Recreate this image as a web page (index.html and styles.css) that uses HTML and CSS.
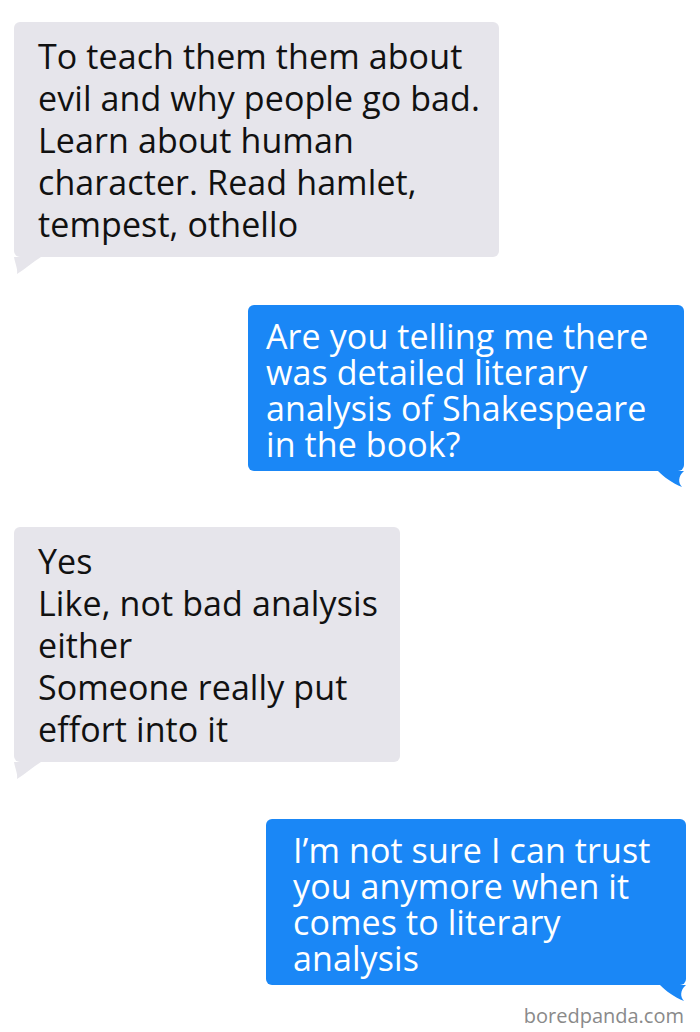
FILE: index.html
```html
<!DOCTYPE html>
<html>
<head>
<meta charset="utf-8">
<link rel="stylesheet" href="styles.css">
</head>
<body>
<div class="chat">
  <div class="bubble gray b1">
    <p>To teach them them about<br>evil and why people go bad.<br>Learn about human<br>character. Read hamlet,<br>tempest, othello</p>
    <svg class="tail tail-left" width="30" height="20" viewBox="0 0 30 20"><path d="M0 0 H27 C19 5 11 12 3 17 C4 12 1 6 0 0 Z" fill="#e6e5eb"/></svg>
  </div>
  <div class="bubble blue b2">
    <p>Are you telling me there<br>was detailed literary<br>analysis of Shakespeare<br>in the book?</p>
    <svg class="tail tail-right" width="30" height="20" viewBox="0 0 30 20"><path d="M30 0 H4 C10 6 18 12 28 16 C24 12 24 5 30 0 Z" fill="#1a87f6"/></svg>
  </div>
  <div class="bubble gray b3">
    <p>Yes<br>Like, not bad analysis<br>either<br>Someone really put<br>effort into it</p>
    <svg class="tail tail-left" width="30" height="20" viewBox="0 0 30 20"><path d="M0 0 H27 C19 5 11 12 3 17 C4 12 1 6 0 0 Z" fill="#e6e5eb"/></svg>
  </div>
  <div class="bubble blue b4">
    <p>I’m not sure I can trust<br>you anymore when it<br>comes to literary<br>analysis</p>
    <svg class="tail tail-right" width="30" height="20" viewBox="0 0 30 20"><path d="M30 0 H4 C10 6 18 12 28 16 C24 12 24 5 30 0 Z" fill="#1a87f6"/></svg>
  </div>
  <div class="credit">boredpanda.com</div>
</div>
</body>
</html>
```

FILE: styles.css
```css
html, body {
  margin: 0;
  padding: 0;
  background: #ffffff;
}
.chat {
  width: 700px;
  height: 1032px;
  box-sizing: border-box;
  padding: 22px 16px 0 14px;
  display: flex;
  flex-direction: column;
  font-family: "Open Sans", "Noto Sans", sans-serif;
}
.bubble {
  position: relative;
  box-sizing: border-box;
  border-radius: 6px;
}
.bubble p {
  margin: 0;
  white-space: nowrap;
  font-size: 34px;
  letter-spacing: 0.1px;
}
.gray {
  background: #e6e5eb;
  color: #111111;
  align-self: flex-start;
  padding: 13px 0 11px 24px;
}
.gray p {
  line-height: 42px;
}
.blue {
  background: #1a87f6;
  color: #ffffff;
  align-self: flex-end;
  padding: 13px 0 8px 18px;
}
.blue p {
  line-height: 36px;
}
.b1 { width: 485px; height: 235px; }
.b2 { width: 436px; height: 166px; margin-top: 48px; }
.b3 { width: 386px; height: 235px; margin-top: 56px; }
.b4 { width: 420px; height: 166px; margin-top: 57px; margin-right: -2px; padding-left: 27px; }
.tail {
  position: absolute;
  top: 100%;
  display: block;
}
.tail-left { left: 0; }
.tail-right { right: 0; }
.credit {
  align-self: flex-end;
  margin-top: 18px;
  font-size: 20px;
  color: #8a8a8a;
  line-height: 26px;
}
```
